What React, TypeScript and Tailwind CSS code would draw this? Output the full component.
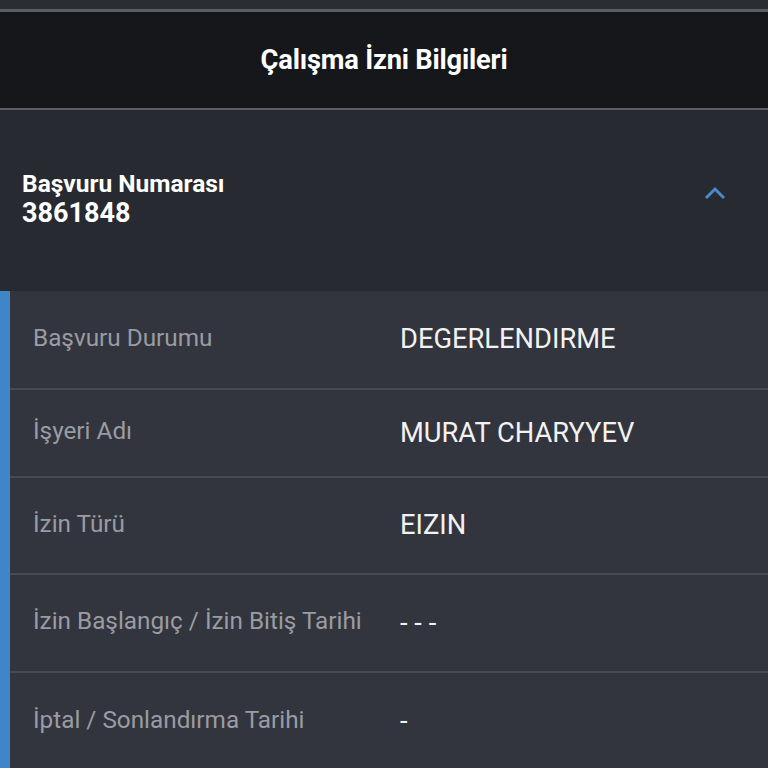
import React from "react"

const rows = [
  { label: "Başvuru Durumu", value: "DEGERLENDIRME", h: "h-[99px]" },
  { label: "İşyeri Adı", value: "MURAT CHARYYEV", h: "h-[88px]" },
  { label: "İzin Türü", value: "EIZIN", h: "h-[97px]" },
  { label: "İzin Başlangıç / İzin Bitiş Tarihi", value: "- - -", h: "h-[98px]" },
  { label: "İptal / Sonlandırma Tarihi", value: "-", h: "h-[97px]" },
]

export default function App() {
  return (
    <div
      className="w-[768px] h-[768px] overflow-hidden bg-[#32353d] flex flex-col"
      style={{ fontFamily: "Roboto, 'Noto Sans', sans-serif" }}
    >
      <div className="h-[9px] bg-[#2a2d34] shrink-0" />
      <div className="h-[3px] bg-[#5a5e66] shrink-0" />
      <div className="h-[96px] bg-[#16171b] flex items-center justify-center shrink-0">
        <h1 className="text-[27.3px] font-bold text-white tracking-[-0.2px]">Çalışma İzni Bilgileri</h1>
      </div>
      <div className="h-[2px] bg-[#5a5e66] shrink-0" />

      <div className="h-[181px] bg-[#272a31] flex items-center justify-between pl-[22px] pr-[41px] shrink-0">
        <div className="flex flex-col -mt-[4px]">
          <span className="text-[24.5px] font-bold text-white leading-[28px]">Başvuru Numarası</span>
          <span className="text-[27px] font-bold text-white leading-[30px]">3861848</span>
        </div>
        <svg width="24" height="14" viewBox="0 0 24 14" className="-mt-[16px]">
          <path d="M3 12 L12 3 L21 12" fill="none" stroke="#4a8ac8" strokeWidth="3" />
        </svg>
      </div>

      <div className="flex flex-1">
        <div className="w-[10px] bg-[#3f86c8] shrink-0" />
        <div className="flex-1 flex flex-col">
          {rows.map((r, i) => (
            <div
              key={r.label}
              className={`${r.h} flex items-center shrink-0 ${i < rows.length - 1 ? "border-b-2 border-[#474a52]" : ""}`}
            >
              <div className="w-[390px] pl-[23px] text-[24.3px] text-[#9a9ca3] -mt-[3px]">{r.label}</div>
              <div className="text-[27.3px] text-[#f2f2f2]">{r.value}</div>
            </div>
          ))}
        </div>
      </div>
    </div>
  )
}
